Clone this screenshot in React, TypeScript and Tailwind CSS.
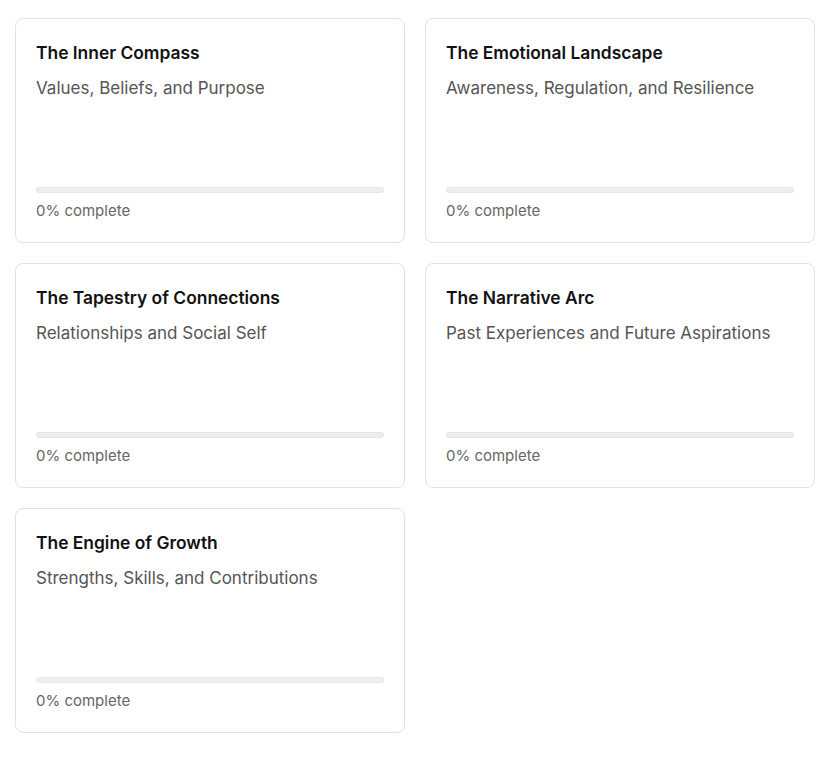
const modules = [
  { title: "The Inner Compass", subtitle: "Values, Beliefs, and Purpose", progress: 0 },
  { title: "The Emotional Landscape", subtitle: "Awareness, Regulation, and Resilience", progress: 0 },
  { title: "The Tapestry of Connections", subtitle: "Relationships and Social Self", progress: 0 },
  { title: "The Narrative Arc", subtitle: "Past Experiences and Future Aspirations", progress: 0 },
  { title: "The Engine of Growth", subtitle: "Strengths, Skills, and Contributions", progress: 0 },
];

const ModuleCard = ({ title, subtitle, progress }: { title: string; subtitle: string; progress: number }) => (
  <div className="h-[225px] rounded-lg border border-[#e2e2e2] bg-white px-5 pt-[22px] pb-5 flex flex-col">
    <h3 className="text-[17.4px] leading-6 font-semibold text-[#111111]">{title}</h3>
    <p className="mt-[11px] text-[17px] leading-6 text-[#555555]">{subtitle}</p>
    <div className="mt-auto">
      <div className="h-[6px] w-full rounded-full bg-[#eeeeee] border border-[#e6e6e6] overflow-hidden">
        <div className="h-full bg-[#3b82f6]" style={{ width: `${progress}%` }} />
      </div>
      <p className="mt-[7px] text-[15px] leading-[22px] text-[#666666]">{progress}% complete</p>
    </div>
  </div>
);

export default function App() {
  return (
    <div className="min-h-screen bg-white pl-[15px] pt-[18px] pb-6" style={{ fontFamily: "Inter, 'Noto Sans', sans-serif" }}>
      <div className="grid grid-cols-[390px_390px] gap-5">
        {modules.map((m) => (
          <ModuleCard key={m.title} {...m} />
        ))}
      </div>
    </div>
  );
}
